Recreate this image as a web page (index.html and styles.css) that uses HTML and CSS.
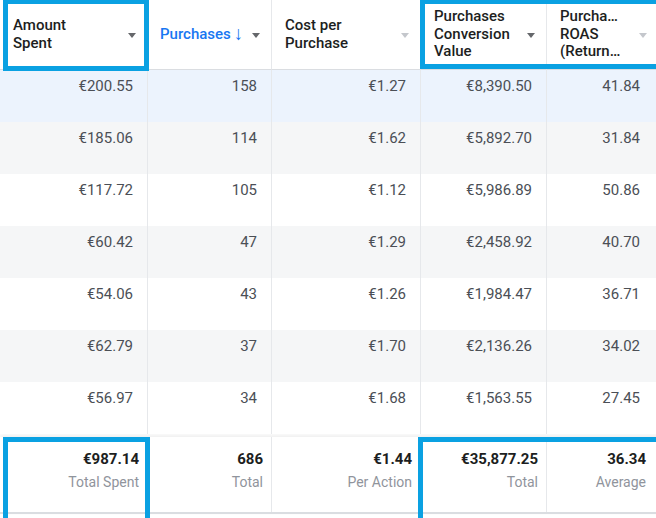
FILE: index.html
```html
<!DOCTYPE html>
<html>
<head>
<meta charset="utf-8">
<link rel="stylesheet" href="styles.css">
</head>
<body>
<div class="wrap">
  <div class="grid">
    <div class="hcell"><span class="htext">Amount<br>Spent</span><span class="tri"></span></div>
    <div class="hcell"><span class="htext sorted">Purchases<span class="arrow">↓</span></span><span class="tri"></span></div>
    <div class="hcell"><span class="htext">Cost per<br>Purchase</span><span class="tri light"></span></div>
    <div class="hcell"><span class="htext">Purchases<br>Conversion<br>Value</span><span class="tri"></span></div>
    <div class="hcell"><span class="htext">Purcha…<br>ROAS<br>(Return…</span><span class="tri light"></span></div>

    <div class="cell r-hl">€200.55</div><div class="cell r-hl">158</div><div class="cell r-hl">€1.27</div><div class="cell r-hl">€8,390.50</div><div class="cell r-hl">41.84</div>
    <div class="cell r-alt">€185.06</div><div class="cell r-alt">114</div><div class="cell r-alt">€1.62</div><div class="cell r-alt">€5,892.70</div><div class="cell r-alt">31.84</div>
    <div class="cell">€117.72</div><div class="cell">105</div><div class="cell">€1.12</div><div class="cell">€5,986.89</div><div class="cell">50.86</div>
    <div class="cell r-alt">€60.42</div><div class="cell r-alt">47</div><div class="cell r-alt">€1.29</div><div class="cell r-alt">€2,458.92</div><div class="cell r-alt">40.70</div>
    <div class="cell">€54.06</div><div class="cell">43</div><div class="cell">€1.26</div><div class="cell">€1,984.47</div><div class="cell">36.71</div>
    <div class="cell r-alt">€62.79</div><div class="cell r-alt">37</div><div class="cell r-alt">€1.70</div><div class="cell r-alt">€2,136.26</div><div class="cell r-alt">34.02</div>
    <div class="cell">€56.97</div><div class="cell">34</div><div class="cell">€1.68</div><div class="cell">€1,563.55</div><div class="cell">27.45</div>
  </div>
  <div class="grid footer">
    <div class="fcell"><span class="fval">€987.14</span><span class="flabel">Total Spent</span></div>
    <div class="fcell"><span class="fval">686</span><span class="flabel">Total</span></div>
    <div class="fcell"><span class="fval">€1.44</span><span class="flabel">Per Action</span></div>
    <div class="fcell"><span class="fval">€35,877.25</span><span class="flabel">Total</span></div>
    <div class="fcell"><span class="fval">36.34</span><span class="flabel">Average</span></div>
  </div>
  <div class="hl hl-a"></div>
  <div class="hl hl-b"></div>
  <div class="hl hl-c"></div>
  <div class="hl hl-d"></div>
</div>
</body>
</html>
```

FILE: styles.css
```css
html, body {
  margin: 0;
  padding: 0;
  background: #ffffff;
}
body {
  font-family: Roboto, "Liberation Sans", sans-serif;
  width: 656px;
  height: 518px;
  overflow: hidden;
}
.wrap {
  position: relative;
  width: 656px;
  height: 518px;
  overflow: hidden;
}
.grid {
  display: grid;
  grid-template-columns: 148px 124px 149px 126px 112px;
  width: 659px;
}
.grid > div { box-sizing: border-box; }
.hcell {
  height: 70px;
  border-bottom: 1px solid #dadde1;
  border-right: 1px solid #e6e8eb;
  display: flex;
  align-items: center;
  justify-content: space-between;
  padding: 0 11px 0 12px;
  background: #fff;
}
.htext {
  font-size: 15px;
  line-height: 17.5px;
  font-weight: 500;
  color: #1c1e21;
  padding-left: 1px;
}
.htext.sorted {
  color: #1877f2;
  padding-left: 0;
}
.arrow {
  font-size: 19px;
  font-weight: 400;
  margin-left: 3px;
  vertical-align: -1px;
}
.tri {
  width: 0;
  height: 0;
  border-left: 4px solid transparent;
  border-right: 4px solid transparent;
  border-top: 5px solid #65676b;
  flex: none;
  margin-top: 2px;
}
.tri.light {
  border-top-color: #c4c7cc;
}
.cell {
  height: 52px;
  border-right: 1px solid #e6e8eb;
  padding: 6px 14px 0 0;
  text-align: right;
  font-size: 15px;
  line-height: 20px;
  color: #4b4f56;
  background: #ffffff;
}
.grid > .cell:nth-child(5n) { padding-right: 18px; }
.r-hl { background: #ecf3fd; }
.r-alt { background: #f5f6f7; }
.footer {
  margin-top: 3px;
  box-shadow: 0 -2px 4px rgba(0, 0, 0, 0.07);
  border-bottom: 2px solid #dadde1;
}
.fcell {
  height: 75px;
  border-right: 1px solid #e6e8eb;
  padding: 12px 8px 0 0;
  display: flex;
  flex-direction: column;
  align-items: flex-end;
  background: #fff;
}
.footer > .fcell:nth-child(5n) { padding-right: 12px; }
.fval {
  font-size: 15px;
  line-height: 20px;
  font-weight: 700;
  color: #1c1e21;
}
.flabel {
  font-size: 14px;
  line-height: 26px;
  color: #90949c;
}
.hl {
  position: absolute;
  border: 5px solid #0aa1e2;
  box-sizing: border-box;
}
.hl-a { left: 3px; top: -1px; width: 146px; height: 72px; }
.hl-b { left: 420px; top: -1px; width: 245px; height: 70px; }
.hl-c { left: 3px; top: 437px; width: 147px; height: 100px; }
.hl-d { left: 418px; top: 437px; width: 250px; height: 100px; }
```
